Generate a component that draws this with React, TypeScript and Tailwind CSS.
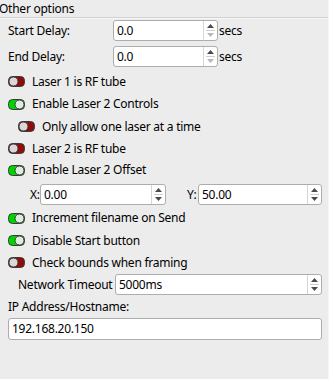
import React from "react";

const Toggle = ({ on }: { on: boolean }) => (
  <svg width="17" height="11" viewBox="0 0 17 11" className="shrink-0">
    {on ? (
      <>
        <rect x="0.5" y="0.5" width="16" height="10" rx="4" fill="#00d400" stroke="#3a3a3a" />
        <circle cx="11.5" cy="5.5" r="4.5" fill="#e4e8e4" stroke="#3a3a3a" />
      </>
    ) : (
      <>
        <rect x="0.5" y="0.5" width="16" height="10" rx="4" fill="#8e0c0c" stroke="#3a3a3a" />
        <circle cx="5.5" cy="5.5" r="4.5" fill="#ddd6d6" stroke="#3a3a3a" />
      </>
    )}
  </svg>
);

const Spin = ({ value, className, downDisabled }: { value: string; className: string; downDisabled?: boolean }) => (
  <div className={`flex h-[21px] shrink-0 rounded-[3px] border border-[#adadad] bg-white ${className}`}>
    <div className="flex flex-1 items-center pl-[3px] text-black">{value}</div>
    <div className="flex w-[14px] flex-col items-center justify-center gap-[2px] border-l border-[#d6d6d6]">
      <svg width="7" height="4" viewBox="0 0 7 4">
        <path d="M3.5 0 L7 4 L0 4 Z" fill="#4a4a4a" />
      </svg>
      <div className="h-px w-[9px] bg-[#cfcfcf]" />
      <svg width="7" height="4" viewBox="0 0 7 4">
        <path d="M0 0 L7 0 L3.5 4 Z" fill={downDisabled ? "#b8b8b8" : "#4a4a4a"} />
      </svg>
    </div>
  </div>
);

const Check = ({ on, label, indent, h }: { on: boolean; label: string; indent?: boolean; h: string }) => (
  <div className={`flex items-center gap-[7px] ${h} ${indent ? "pl-[18px]" : "pl-[8px]"}`}>
    <Toggle on={on} />
    <span className="whitespace-nowrap">{label}</span>
  </div>
);

export default function App() {
  return (
    <div
      className="relative h-[379px] w-[329px] overflow-hidden bg-[#ececec] text-[12px] tracking-[-0.25px] text-black"
      style={{ fontFamily: '"Noto Sans", "Open Sans", sans-serif' }}
    >
      <div className="absolute right-0 top-0 h-full w-px bg-[#f6f6f6]" />
      <div className="-ml-[1px] flex h-[17px] items-center leading-none">Other options</div>
      <div className="h-px w-[328px] bg-[#d2d2d2]" />
      <div className="h-px w-[328px] bg-[#f7f7f7]" />

      <div className="mt-[1px] flex h-[21px] items-center pl-[8px]">
        <span className="w-[105px]">Start Delay:</span>
        <Spin value="0.0" className="w-[105px]" downDisabled />
        <span className="pl-[1px]">secs</span>
      </div>
      <div className="mt-[5px] flex h-[21px] items-center pl-[8px]">
        <span className="w-[105px]">End Delay:</span>
        <Spin value="0.0" className="w-[105px]" downDisabled />
        <span className="pl-[1px]">secs</span>
      </div>

      <div className="mt-[3px]">
        <Check on={false} label="Laser 1 is RF tube" h="h-[23px]" />
        <Check on={true} label="Enable Laser 2 Controls" h="h-[22px]" />
        <Check on={false} label="Only allow one laser at a time" indent h="h-[23px]" />
        <Check on={false} label="Laser 2 is RF tube" h="h-[21px]" />
        <Check on={true} label="Enable Laser 2 Offset" h="h-[22px]" />
      </div>

      <div className="mt-[3px] flex h-[21px] items-center pl-[30px]">
        <span className="w-[10px]">X:</span>
        <Spin value="0.00" className="w-[126px]" />
        <span className="ml-[21px] w-[11px]">Y:</span>
        <Spin value="50.00" className="w-[124px]" />
      </div>

      <div className="mt-[2px]">
        <Check on={true} label="Increment filename on Send" h="h-[22px]" />
        <Check on={true} label="Disable Start button" h="h-[23px]" />
        <Check on={false} label="Check bounds when framing" h="h-[21px]" />
      </div>

      <div className="mt-[1px] flex h-[21px] items-center pl-[18px]">
        <span className="w-[97px] shrink-0 whitespace-nowrap">Network Timeout</span>
        <Spin value="5000ms" className="w-[207px]" />
      </div>

      <div className="flex h-[23px] items-center pl-[8px]">IP Address/Hostname:</div>
      <div className="ml-[8px] flex h-[22px] w-[314px] items-center rounded-[3px] border border-[#adadad] bg-white pl-[3px]">
        192.168.20.150
      </div>
    </div>
  );
}
